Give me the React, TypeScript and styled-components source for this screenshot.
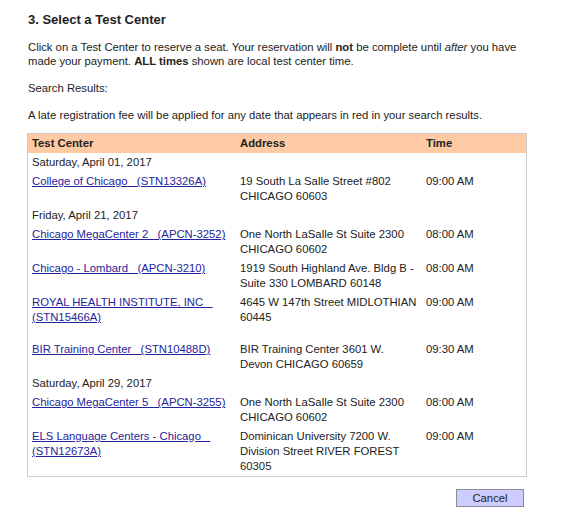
import { Fragment } from "react";
import styled, { createGlobalStyle } from "styled-components";

const GlobalStyle = createGlobalStyle`
	body {
		margin: 0;
		background: #fff;
		font-family: "Liberation Sans", Arial, sans-serif;
		color: #222;
	}
`;

type Session = {
	name: string;
	code: string;
	address: string;
	time: string;
	tall?: boolean;
};

type Day = {
	date: string;
	sessions: Session[];
};

const days: Day[] = [
	{
		date: "Saturday, April 01, 2017",
		sessions: [
			{ name: "College of Chicago", code: "STN13326A", address: "19 South La Salle Street #802 CHICAGO 60603", time: "09:00 AM" },
		],
	},
	{
		date: "Friday, April 21, 2017",
		sessions: [
			{ name: "Chicago MegaCenter 2", code: "APCN-3252", address: "One North LaSalle St Suite 2300 CHICAGO 60602", time: "08:00 AM" },
			{ name: "Chicago - Lombard", code: "APCN-3210", address: "1919 South Highland Ave. Bldg B - Suite 330 LOMBARD 60148", time: "08:00 AM" },
			{ name: "ROYAL HEALTH INSTITUTE, INC", code: "STN15466A", address: "4645 W 147th Street MIDLOTHIAN 60445", time: "09:00 AM", tall: true },
			{ name: "BIR Training Center", code: "STN10488D", address: "BIR Training Center 3601 W. Devon CHICAGO 60659", time: "09:30 AM" },
		],
	},
	{
		date: "Saturday, April 29, 2017",
		sessions: [
			{ name: "Chicago MegaCenter 5", code: "APCN-3255", address: "One North LaSalle St Suite 2300 CHICAGO 60602", time: "08:00 AM" },
			{ name: "ELS Language Centers - Chicago", code: "STN12673A", address: "Dominican University 7200 W. Division Street RIVER FOREST 60305", time: "09:00 AM" },
		],
	},
];

const Page = styled.div`
	width: 500px;
	padding: 12px 0 20px 27px;
	font-size: 11.3px;
	line-height: 14px;
`;

const Title = styled.h2`
	margin: 0 0 12px 1px;
	font-size: 13px;
	line-height: 16px;
	font-weight: bold;
	color: #222;
`;

const Para = styled.p`
	margin: 0 0 13px 1px;
`;

const Results = styled.table`
	width: 500px;
	margin-top: -2px;
	border: 1px solid #ccc;
	border-collapse: separate;
	border-spacing: 0;
	table-layout: fixed;
	line-height: 15px;
`;

const HeadCell = styled.th<{ $w?: number }>`
	width: ${(p) => (p.$w ? `${p.$w}px` : "auto")};
	background: #fdcaa3;
	text-align: left;
	font-weight: bold;
	padding: 2px 4px;
	color: #222;
`;

const DateCell = styled.td`
	padding: 2px 4px;
`;

const Cell = styled.td<{ $tall?: boolean }>`
	vertical-align: top;
	padding: 2px 4px ${(p) => (p.$tall ? "15px" : "2px")} 4px;
`;

const CenterLink = styled.a`
	color: #24249c;
	text-decoration: underline;
	white-space: pre-wrap;
`;

const Footer = styled.div`
	display: flex;
	justify-content: flex-end;
	width: 497px;
	margin-top: 12px;
`;

const CancelButton = styled.button`
	width: 68px;
	height: 18px;
	padding: 0;
	background: #ccccfe;
	border: 1px solid #8a8a9a;
	font-family: "Liberation Sans", Arial, sans-serif;
	font-size: 11.3px;
	color: #222;
`;

export default function App() {
	return (
		<>
			<GlobalStyle />
			<Page>
				<Title>3. Select a Test Center</Title>
				<Para>
					Click on a Test Center to reserve a seat. Your reservation will <b>not</b> be complete until <i>after</i> you have made
					your payment. <b>ALL times</b> shown are local test center time.
				</Para>
				<Para>Search Results:</Para>
				<Para>A late registration fee will be applied for any date that appears in red in your search results.</Para>
				<Results>
					<thead>
						<tr>
							<HeadCell $w={200}>Test Center</HeadCell>
							<HeadCell $w={178}>Address</HeadCell>
							<HeadCell>Time</HeadCell>
						</tr>
					</thead>
					<tbody>
						{days.map((day) => (
							<Fragment key={day.date}>
								<tr>
									<DateCell colSpan={3}>{day.date}</DateCell>
								</tr>
								{day.sessions.map((s) => (
									<tr key={s.code}>
										<Cell $tall={s.tall}>
											<CenterLink href="#">{`${s.name}   (${s.code})`}</CenterLink>
										</Cell>
										<Cell $tall={s.tall}>{s.address}</Cell>
										<Cell $tall={s.tall}>{s.time}</Cell>
									</tr>
								))}
							</Fragment>
						))}
					</tbody>
				</Results>
				<Footer>
					<CancelButton type="button">Cancel</CancelButton>
				</Footer>
			</Page>
		</>
	);
}
